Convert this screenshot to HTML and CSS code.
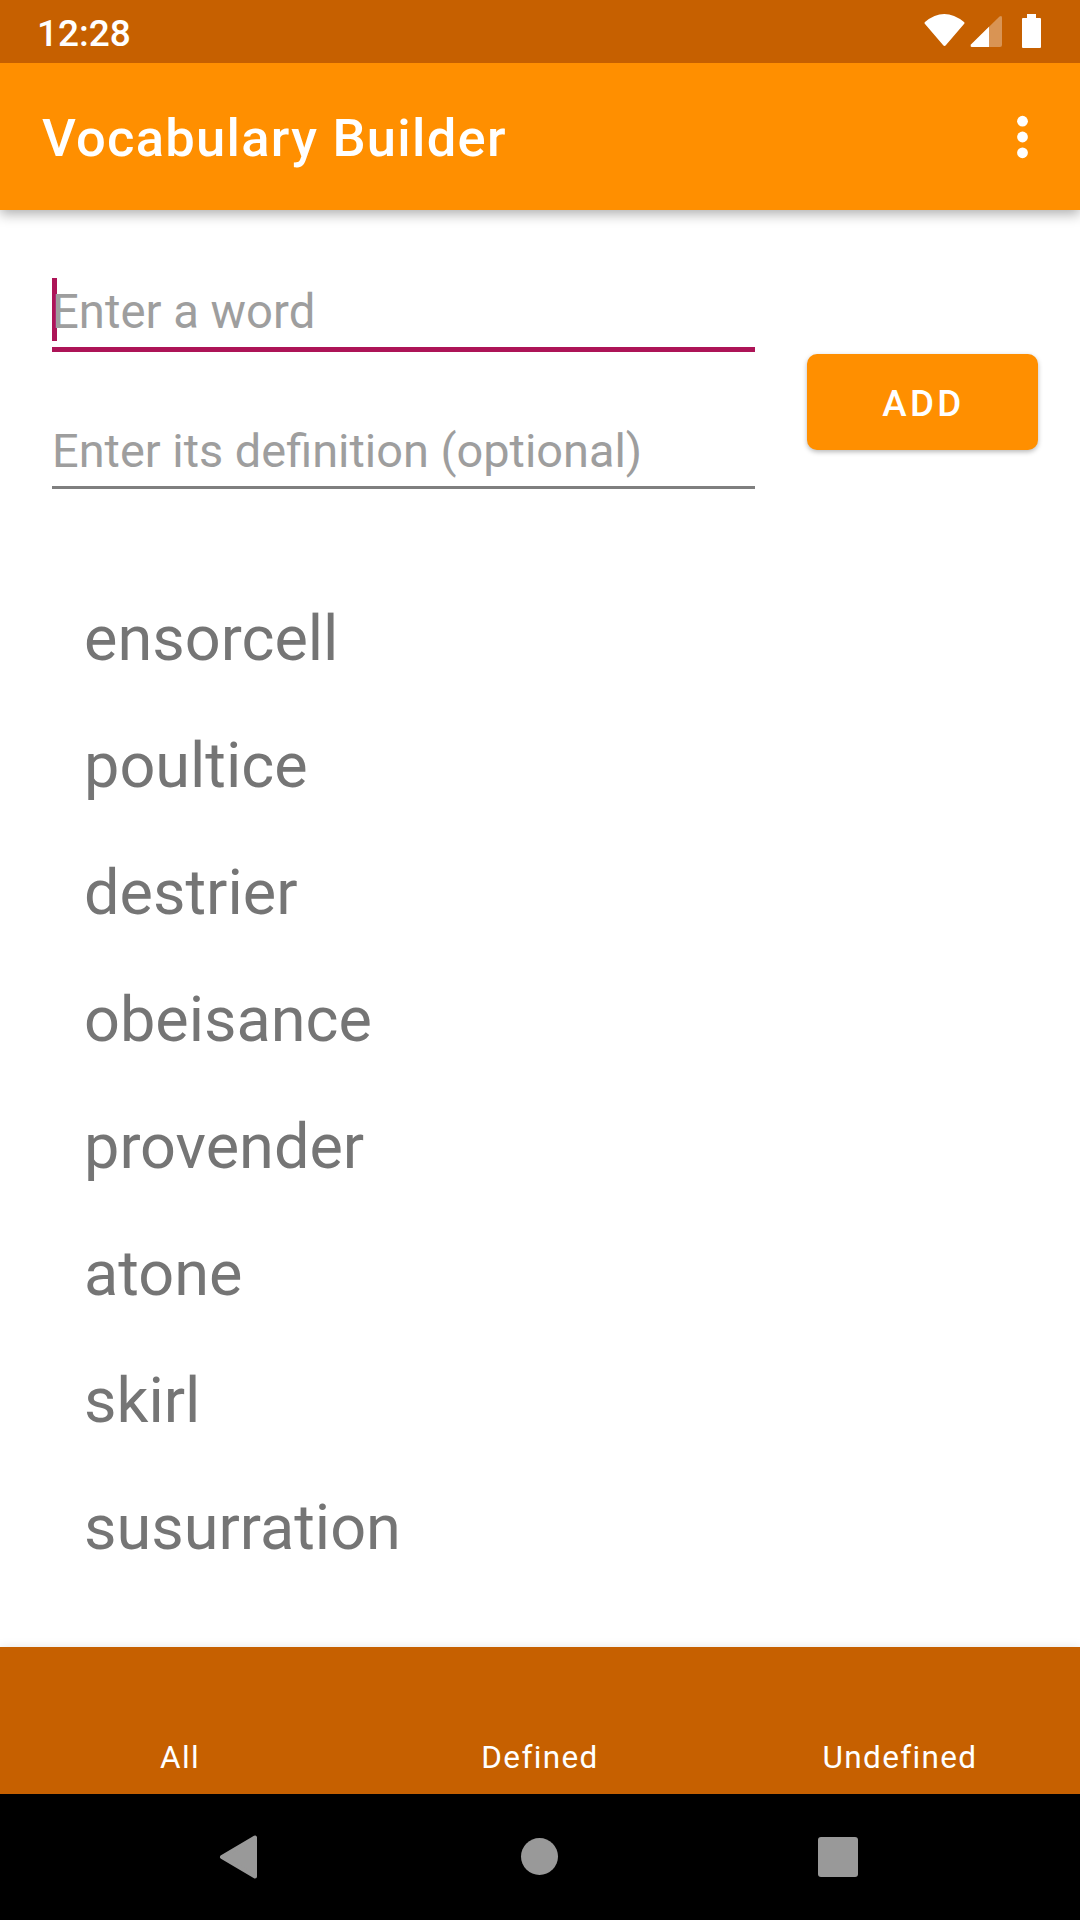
FILE: index.html
```html
<!DOCTYPE html>
<html lang="en">
<head>
<meta charset="utf-8">
<title>Vocabulary Builder</title>
<link rel="stylesheet" href="styles.css">
</head>
<body>
<div class="status-bar">
  <span class="clock">12:28</span>
  <svg class="status-icons" width="120" height="36" viewBox="0 0 120 36">
    <path d="M3 8Q22-8 42 8Q43 9 42 10L24 31Q22.500 33 21 31L3 10Q2 9 3 8Z" fill="#fff"/>
    <path d="M50 33Q48 33 49 30.500L77.500 2.500Q80 1 80 3.500V31Q80 33 78 33Z" fill="#fff" fill-opacity=".33"/>
    <path d="M50 33Q48 33 49 30.500L67 12.800V33Z" fill="#fff"/>
    <path d="M105 0h9v4h4q1 0 1 1v28q0 1-1 1h-17q-1 0-1-1v-28q0-1 1-1h4z" fill="#fff"/>
  </svg>
</div>
<header class="app-bar">
  <h1 class="title">Vocabulary Builder</h1>
  <svg class="overflow" width="12" height="44" viewBox="0 0 12 44" fill="#fff"><circle cx="6.500" cy="6.200" r="5.400"/><circle cx="6.500" cy="22" r="5.400"/><circle cx="6.500" cy="37.800" r="5.400"/></svg>
</header>
<main class="content">
  <section class="entry">
    <div class="fields">
      <div class="field field-active"><span class="caret"></span>Enter a word</div>
      <div class="field">Enter its definition (optional)</div>
    </div>
    <button class="add">ADD</button>
  </section>
  <ul class="words">
    <li>ensorcell</li>
    <li>poultice</li>
    <li>destrier</li>
    <li>obeisance</li>
    <li>provender</li>
    <li>atone</li>
    <li>skirl</li>
    <li>susurration</li>
  </ul>
</main>
<nav class="tabs"><span>All</span><span>Defined</span><span>Undefined</span></nav>
<footer class="system-nav">
  <svg width="1080" height="126" viewBox="0 0 1080 126" fill="#999"><path d="M222 63L255 43.500V82.500Z" stroke="#999" stroke-width="4" stroke-linejoin="round"/><circle cx="539.500" cy="62.500" r="18.500"/><rect x="818" y="43" width="40" height="40" rx="3"/></svg>
</footer>
</body>
</html>
```
FILE: styles.css
```css
* { box-sizing: border-box; }
body { margin: 0; width: 1080px; height: 1920px; display: flex; flex-direction: column; overflow: hidden; font-family: Roboto, sans-serif; background: #fff; }
.status-bar { position: relative; z-index: 1; height: 63px; flex: none; background: #c66000; display: flex; justify-content: space-between; padding: 14px 38px 0 37px; color: #fff; }
.clock { padding-top: 2px; font-size: 37px; font-weight: 500; line-height: 36px; }
.app-bar { height: 147px; flex: none; background: #ff8f00; color: #fff; display: flex; align-items: center; justify-content: space-between; padding: 0 52px 0 42px; box-shadow: 0 4px 12px rgba(0,0,0,.32); }
.title { margin: 3px 0 0; font-size: 52.5px; font-weight: 500; letter-spacing: 1.28px; }
.content { flex: 1; }
.entry { display: flex; padding: 68px 42px 0 52px; }
.fields { width: 703px; margin-right: 52px; }
.field { position: relative; height: 73px; line-height: 70px; font-size: 46.9px; color: #9e9e9e; border-bottom: 3px solid #7f7f7f; white-space: nowrap; }
.field-active { height: 74px; line-height: 68px; font-size: 47.25px; border-bottom: 5px solid #ad1457; margin-bottom: 64px; }
.caret { position: absolute; left: 0; top: 0; width: 5px; height: 63px; background: #ad1457; z-index: -1; }
.add { margin: 76px 0 0; width: 231px; height: 96px; border: 0; border-radius: 10px; background: #ff8f00; color: #fff; font: 500 36.75px Roboto, sans-serif; letter-spacing: 3.3px; padding: 2px 0 0 2px; box-shadow: 0 2px 5px rgba(0,0,0,.28); }
.words { list-style: none; margin: 86px 0 0; padding: 0 0 0 84px; font-size: 63px; color: #757575; }
.words li { height: 127px; line-height: 127px; }
.tabs { height: 147px; flex: none; background: #c66000; display: flex; color: #fff; font-size: 31.5px; letter-spacing: 1.35px; padding-top: 92px; line-height: 37px; box-shadow: 0 0 10px rgba(0,0,0,.1); }
.tabs span { flex: 1; text-align: center; }
.system-nav { height: 126px; flex: none; background: #000; }
```
